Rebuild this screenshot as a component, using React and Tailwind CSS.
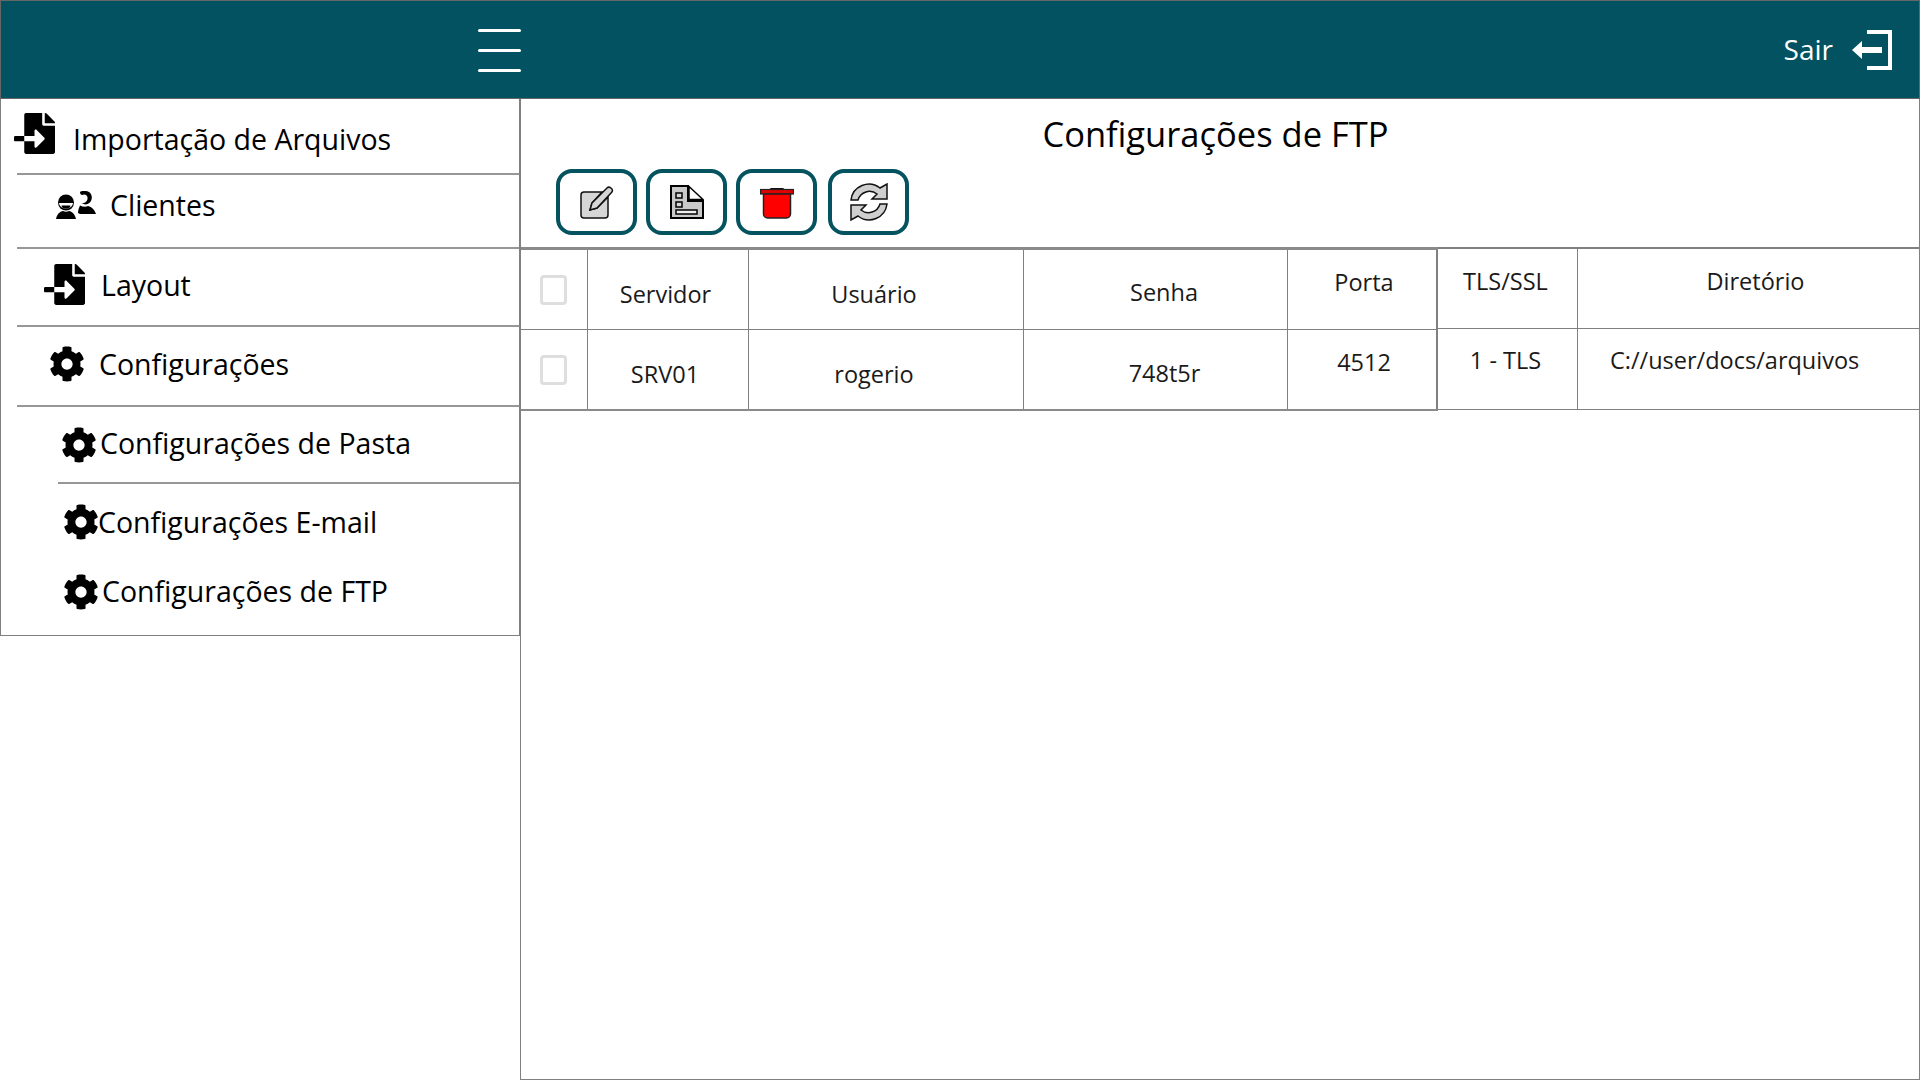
import React from "react";
import { FaFileImport, FaCog } from "react-icons/fa";

const font = { fontFamily: '"Open Sans", sans-serif' };

function Rule({ left = "ml-[16px]" }) {
  return <div className={`h-[2px] bg-[#979797] ${left}`} />;
}

function Clients() {
  return (
    <svg width="40" height="28" viewBox="0 0 40 28" className="shrink-0">
      <circle cx="10" cy="11.500" r="8" fill="#000" />
      <path d="M3 12h14a7 5.500 0 0 1-14 0z" fill="#fff" />
      <path d="M5.500 14.500h9a4.500 3 0 0 1-9 0z" fill="#000" />
      <path d="M0 28c1-5 4-7.500 7-8 2 1 4 1 6 0 3 .5 6 3 7 8z" fill="#000" />
      <path d="M24 1c2-1.500 6-1.500 9 0 3 2 3.500 6 2 9-1 2-3 3-5 3.500l-5-1c3 0 6-1.500 6.500-4.500.5-2.500-1-4.500-3.500-4.500-2 1-4 .5-4-2.500z" fill="#000" />
      <path d="M24 14.500c3 1.500 6 1.500 8 .5 4 1 6.500 3.500 8 8H24l-2-1c0-3 1-5 2-7.500z" fill="#000" />
    </svg>
  );
}

function Exit() {
  return (
    <svg width="40" height="40" viewBox="0 0 40 40" className="shrink-0 ml-[19px]">
      <path d="M15 2h23v36H15" fill="none" stroke="#fff" strokeWidth="4" />
      <path d="M0 20 10 11v6h20v6H10v6z" fill="#fff" />
    </svg>
  );
}

function EditIcon() {
  return (
    <svg width="34" height="33" viewBox="0 0 34 33">
      <path d="M1 9a3 3 0 0 1 3-3h18L12 17l-2 7 7-2 11-11v18a3 3 0 0 1-3 3H4a3 3 0 0 1-3-3z" fill="#d6d6d6" stroke="#111" strokeWidth="1.500" />
      <path d="M10 24l2-7L27 2c1-1 3-1 4.500.500s1 3 0 4L17 22z" fill="#d6d6d6" stroke="#111" strokeWidth="1.500" />
    </svg>
  );
}

function DocIcon() {
  return (
    <svg width="34" height="34" viewBox="0 0 34 34">
      <path d="M1 1h17v15h15v17H1z" fill="#c9c9c9" stroke="#000" strokeWidth="2" />
      <path d="M19 1.500v13h14z" fill="#fff" stroke="#000" strokeWidth="1.500" />
      <rect x="6" y="8" width="6" height="5" fill="#d8d8d8" stroke="#000" strokeWidth="1.500" />
      <rect x="6" y="17" width="6" height="5" fill="#d8d8d8" stroke="#000" strokeWidth="1.500" />
      <rect x="6" y="25" width="21" height="4" fill="#eee" stroke="#000" strokeWidth="1.500" />
    </svg>
  );
}

function TrashIcon() {
  return (
    <svg width="34" height="33" viewBox="0 0 34 33">
      <path d="M11 2h12l3 2H8z" fill="#111" />
      <rect x=".5" y="3.500" width="33" height="4.500" fill="#e00000" stroke="#222" strokeWidth="1.200" />
      <path d="M3.500 8h27v20a4 4 0 0 1-4 4h-19a4 4 0 0 1-4-4z" fill="#ff0000" stroke="#222" strokeWidth="1.500" />
    </svg>
  );
}

function SyncIcon() {
  const arm = "M1 17A18 18 0 0 1 30 5L37 1V16H22L27 11A12 12 0 0 0 8 17Z";
  return (
    <svg width="38" height="38" viewBox="0 0 38 38">
      <path d={arm} fill="#cfcfcf" stroke="#111" strokeWidth="1.500" />
      <path d={arm} fill="#cfcfcf" stroke="#111" strokeWidth="1.500" transform="rotate(180 19 19)" />
    </svg>
  );
}

function NavRow({ className, icon, label, labelClass, rule }) {
  return (
    <>
      <div className={`flex items-center ${className}`}>
        {icon}
        <span className={labelClass}>{label}</span>
      </div>
      {rule}
    </>
  );
}

function Tool({ children, gap = "ml-[9px]" }) {
  return (
    <button className={`w-[81px] h-[66px] border-[4px] border-[#04535f] rounded-[16px] bg-white flex items-center justify-center ${gap}`}>
      {children}
    </button>
  );
}

function Check() {
  return <div className="w-[27px] h-[30px] border-[3px] border-[#dedede] rounded-[4px]" />;
}

function Cell({ w, className = "", children, text = "" }) {
  return (
    <div className={`h-full flex justify-center border-r border-[#808080] text-[23.500px] leading-[32px] text-[#1a1a1a] shrink-0 ${w} ${className} ${text}`}>
      {children}
    </div>
  );
}

const cols = ["w-[67px]", "w-[161px]", "w-[275px]", "w-[264px]"];

export default function App() {
  return (
    <div style={font} className="w-[1920px] h-[1080px] bg-white text-black overflow-hidden flex flex-col">
      <header className="h-[99px] shrink-0 bg-[#035262] border border-[#666] flex items-center pl-[477px] pr-[27px]">
        <div className="w-[43px] mt-[2px] flex flex-col gap-[17px]">
          <div className="h-[3px] bg-white rounded-full" />
          <div className="h-[3px] bg-white rounded-full" />
          <div className="h-[3px] bg-white rounded-full" />
        </div>
        <div className="ml-auto flex items-center text-white text-[28px]">
          <span className="-mt-[2px]">Sair</span>
          <Exit />
        </div>
      </header>

      <div className="flex flex-1 min-h-0">
        <aside className="w-[520px] h-[537px] shrink-0 border-l border-r border-b border-[#808080] pt-[14px] text-[28.500px] leading-[38px]">
          <NavRow className="h-[60px] pl-[13px] items-start" icon={<FaFileImport size={41} className="shrink-0" />} label="Importação de Arquivos" labelClass="ml-[18px] mt-[7px]" rule={<Rule />} />
          <NavRow className="h-[72px] pl-[55px] pb-[13px]" icon={<Clients />} label="Clientes" labelClass="ml-[14px]" rule={<Rule />} />
          <NavRow className="h-[76px] pl-[43px] pb-[5px]" icon={<FaFileImport size={41} className="shrink-0" />} label="Layout" labelClass="ml-[16px] mt-[1px]" rule={<Rule />} />
          <NavRow className="h-[78px] pl-[48px] pb-[4px]" icon={<FaCog size={36} className="shrink-0" />} label="Configurações" labelClass="ml-[14px] -mt-[1px]" rule={<Rule />} />
          <NavRow className="h-[75px] pl-[60px]" icon={<FaCog size={36} className="shrink-0" />} label="Configurações de Pasta" labelClass="ml-[3px] -mt-[3px]" rule={<Rule left="ml-[57px]" />} />
          <NavRow className="h-[75px] pl-[62px] pt-[1px]" icon={<FaCog size={36} className="shrink-0" />} label="Configurações E-mail" labelClass="-ml-[1px]" />
          <NavRow className="h-[60px] pl-[62px] pt-[5px]" icon={<FaCog size={36} className="shrink-0" />} label="Configurações de FTP" labelClass="ml-[3px] -mt-[1px]" />
        </aside>

        <main className="flex-1 min-w-0 border-l border-r border-b border-[#808080] flex flex-col">
          <h1 className="h-[70px] shrink-0 text-center text-[34.500px] leading-[70px] font-normal pr-[9px]">Configurações de FTP</h1>
          <div className="h-[78px] shrink-0 flex items-start pl-[35px]">
            <Tool gap=""><EditIcon /></Tool>
            <Tool><DocIcon /></Tool>
            <Tool><TrashIcon /></Tool>
            <Tool gap="ml-[11px]"><SyncIcon /></Tool>
          </div>

          <div className="flex items-start">
            <div className="w-[917px] shrink-0 border-t-[3px] border-b-2 border-[#8a8a8a]">
              <div className="h-[80px] flex border-b border-[#808080]">
                <Cell w={cols[0]} className="items-center pr-[2px]"><Check /></Cell>
                <Cell w={cols[1]} className="pt-[28px] pr-[5px]">Servidor</Cell>
                <Cell w={cols[2]} className="pt-[28px] pr-[24px]">Usuário</Cell>
                <Cell w={cols[3]} className="pt-[26px] pl-[17px]">Senha</Cell>
                <Cell w="w-[150px]" className="pt-[16px] border-r-2 pl-[4px]">Porta</Cell>
              </div>
              <div className="h-[79px] flex">
                <Cell w={cols[0]} className="items-center pr-[2px]"><Check /></Cell>
                <Cell w={cols[1]} className="pt-[28px] pr-[6px]">SRV01</Cell>
                <Cell w={cols[2]} className="pt-[28px] pr-[24px]">rogerio</Cell>
                <Cell w={cols[3]} className="pt-[27px] pl-[18px]">748t5r</Cell>
                <Cell w="w-[150px]" className="pt-[16px] border-r-2 pl-[4px]">4512</Cell>
              </div>
            </div>
            <div className="flex-1 min-w-0 border-t-2 border-b border-[#808080]">
              <div className="h-[80px] flex border-b border-[#808080]">
                <Cell w="w-[140px]" className="pt-[16px] pr-[4px]">TLS/SSL</Cell>
                <Cell w="flex-1 shrink" className="pt-[16px] border-r-0 pl-[14px]">Diretório</Cell>
              </div>
              <div className="h-[80px] flex">
                <Cell w="w-[140px]" className="pt-[15px] pr-[4px]">1 - TLS</Cell>
                <Cell w="flex-1 shrink" className="pt-[15px] border-r-0 justify-start pl-[32px]">C://user/docs/arquivos</Cell>
              </div>
            </div>
          </div>
        </main>
      </div>
    </div>
  );
}
